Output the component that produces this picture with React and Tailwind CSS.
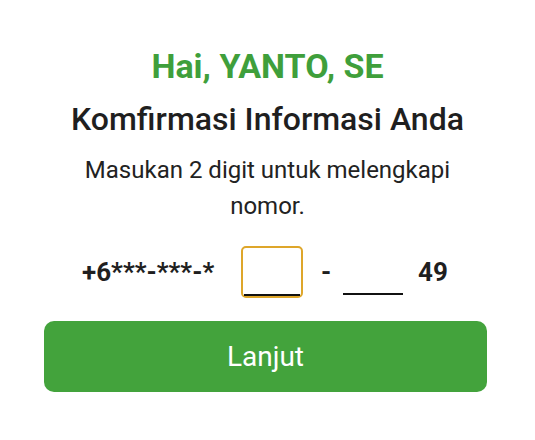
export default function App() {
  return (
    <div className="w-[535px] h-[440px] bg-white flex flex-col items-center font-['Roboto',sans-serif]">
      <h1 className="mt-[46px] text-[34px] leading-[40px] font-bold text-[#3f9f3b]">
        Hai, YANTO, SE
      </h1>
      <h2 className="mt-[13px] text-[32px] leading-[40px] font-medium text-[#1f1f1f]">
        Komfirmasi Informasi Anda
      </h2>
      <p className="mt-[13px] w-[390px] text-center text-[24px] leading-[36px] text-[#222222]">
        Masukan 2 digit untuk melengkapi nomor.
      </p>

      {/* masked phone number with the two missing digits */}
      <div className="mt-[22px] self-start ml-[82px] h-[52px] flex items-center">
        <span className="w-[159px] text-[26px] font-bold text-[#1f1f1f]">+6***-***-*</span>
        <div className="w-[62px] h-[52px] rounded-[5px] border-2 border-[#dea62a] px-[1px] pt-[1px] flex">
          <div className="flex-1 border-b-2 border-[#111]" />
        </div>
        <span className="w-[40px] pl-[18px] text-[26px] font-bold text-[#1f1f1f]">-</span>
        <div className="w-[60px] h-[52px] flex items-end pb-[3px]">
          <div className="w-full h-[2px] bg-[#111]" />
        </div>
        <span className="ml-[15px] text-[26px] font-bold text-[#1f1f1f]">49</span>
      </div>

      <button className="mt-[23px] self-start ml-[44px] w-[443px] h-[71px] rounded-[10px] bg-[#43a33c] text-white text-[28px] leading-none">
        Lanjut
      </button>
    </div>
  );
}
